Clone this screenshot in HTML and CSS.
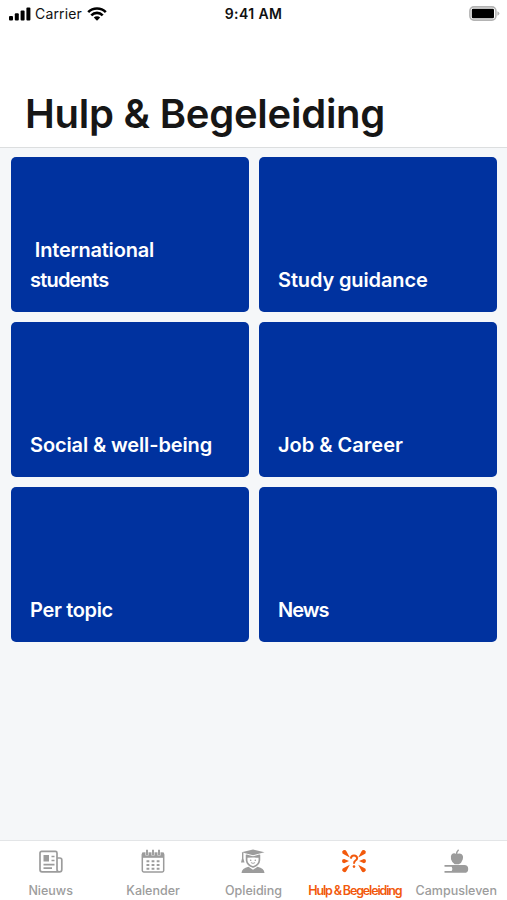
FILE: index.html
```html
<!DOCTYPE html>
<html lang="nl">
<head>
  <meta charset="UTF-8">
  <title>Hulp &amp; Begeleiding</title>
  <meta name="viewport" content="width=device-width, initial-scale=1.0">
  <link rel="stylesheet" href="styles.css">
</head>
<body>

  <header class="header">
    <div class="status-bar">
      <div class="status-left">
        <svg class="signal" width="22" height="14" viewBox="0 0 22 14">
          <rect x="0" y="9" width="4" height="4.5" rx="1"/>
          <rect x="5.8" y="6.3" width="4" height="7.2" rx="1"/>
          <rect x="11.6" y="3.5" width="4" height="10" rx="1"/>
          <rect x="17.4" y="0.5" width="4" height="13" rx="1"/>
        </svg>
        <span class="carrier">Carrier</span>
        <svg class="wifi" width="20" height="14" viewBox="0 0 20 14">
          <path d="M1.2 5.2a12.4 12.4 0 0 1 17.6 0M4.3 8.3a8 8 0 0 1 11.4 0" fill="none" stroke="#000" stroke-width="2.6"/>
          <path d="M10 13.8l-3.2-3.2a4.6 4.6 0 0 1 6.4 0z"/>
        </svg>
      </div>
      <span class="time">9:41 AM</span>
      <div class="status-right">
        <svg class="battery" width="31" height="15" viewBox="0 0 31 15">
          <rect x="0.9" y="0.9" width="26" height="13.2" rx="4" fill="#fff" stroke="#b3b3b3" stroke-width="1.6"/>
          <rect x="2.8" y="2.8" width="22.2" height="9.4" rx="1.2"/>
          <path d="M28.4 5.2q2 .8 2 2.3t-2 2.3z" fill="#b3b3b3"/>
        </svg>
      </div>
    </div>
    <h1>Hulp &amp; Begeleiding</h1>
  </header>

  <main class="cards">
    <a class="card"><span class="label-international">&nbsp;International<br><span class="label-students">students</span></span></a>
    <a class="card"><span class="label-study">Study guidance</span></a>
    <a class="card"><span class="label-social">Social &amp; well-being</span></a>
    <a class="card"><span class="label-job">Job &amp; Career</span></a>
    <a class="card"><span class="label-topic">Per topic</span></a>
    <a class="card"><span class="label-news">News</span></a>
  </main>

  <nav class="tab-bar">
    <a class="tab">
      <svg width="26" height="26" viewBox="0 0 26 26" fill="none" stroke="currentColor" stroke-width="1.7">
        <path d="M19 22.8H4a2 2 0 0 1-2-2V4a1.6 1.6 0 0 1 1.6-1.6h13.8A1.6 1.6 0 0 1 19 4v16.5a2.4 2.4 0 0 0 4.8 0V11a2 2 0 0 0-2-2H19M21.5 22.8H18"/>
        <rect x="5.5" y="6" width="5.5" height="6.5" fill="currentColor" stroke="none"/>
        <path d="M13.5 7.5h3M13.5 11.5h3M5.5 15.6h11M5.5 19.2h8.5"/>
      </svg>
      <span>Nieuws</span>
    </a>
    <a class="tab">
      <svg class="icon-kalender" width="26" height="26" viewBox="0 0 26 26" fill="none" stroke="currentColor" stroke-width="1.5">
        <rect x="2.3" y="4.2" width="21.4" height="18.8" rx="1.4"/>
        <path d="M2 3.6h22v5.2H2z" fill="currentColor" stroke="none"/>
        <path d="M7 1.5v5M13 1.5v5M19 1.5v5" stroke="#fff" stroke-width="3"/>
        <path d="M7 .8v5.4M13 .8v5.4M19 .8v5.4" stroke-width="1.9"/>
        <path d="M6.5 12.2h13M6.5 16h13M6.5 19.8h13" stroke-width="2.1" stroke-dasharray="2.8 2.3"/>
      </svg>
      <span class="tab-kalender">Kalender</span>
    </a>
    <a class="tab">
      <svg width="26" height="26" viewBox="0 0 26 26" fill="currentColor">
        <path d="M13 .6l11.5 2.6L13 6.2 1.5 3.2z"/>
        <path d="M2 3.6h1.4v6l1.1 3.8H1L2 9.6z"/>
        <path d="M6.6 5.8v5.4q.4 4.6 6.4 6.8 6-2.2 6.4-6.8V5.8" fill="none" stroke="currentColor" stroke-width="1.7"/>
        <path d="M6.5 5.6L13 7.3l6.5-1.7v3.2q-4-.4-6.5-.4t-6.5.4z"/>
        <circle cx="10.7" cy="11.2" r=".8"/>
        <circle cx="15.3" cy="11.2" r=".8"/>
        <path d="M10.9 13.6q2.1 1.6 4.2 0" fill="none" stroke="currentColor" stroke-width=".9"/>
        <path d="M1.5 24q.3-4.8 7-6.2l4.5 3 4.5-3q6.7 1.4 7 6.2z"/>
      </svg>
      <span>Opleiding</span>
    </a>
    <a class="tab active">
      <svg class="icon-hulp" width="26" height="26" viewBox="0 0 26 26" fill="currentColor">
        <path d="M1.5 4.4a2.2 2.2 0 0 1 3.9-2.2L8.8 8.4 3.2 5.5z"/>
        <path d="M24.5 4.4a2.2 2.2 0 0 0-3.9-2.2l-3.4 6.2 5.6-2.9z"/>
        <path d="M3.1 10a2.1 2.1 0 0 0 0 4.2L8 12.1z"/>
        <path d="M22.9 10a2.1 2.1 0 0 1 0 4.2L18 12.1z"/>
        <path d="M1.5 19.8a2.2 2.2 0 0 0 3.9 2.2l3.4-6.2-5.6 2.9z"/>
        <path d="M24.5 19.8a2.2 2.2 0 0 1-3.9 2.2l-3.4-6.2 5.6 2.9z"/>
        <circle cx="13" cy="17.6" r="1.3"/>
        <path d="M9.9 9.6q.2-3.2 3.1-3.2t3.1 2.8q0 1.4-1.6 2.3-1.5.9-1.5 3.2" fill="none" stroke="currentColor" stroke-width="2"/>
      </svg>
      <span class="tab-hulp">Hulp &amp; Begeleiding</span>
    </a>
    <a class="tab">
      <svg width="26" height="26" viewBox="0 0 26 26" fill="currentColor">
        <path d="M13.5 5q-2.8-1.4-4.7.2Q7 7 8 10.3q1.2 3.8 3.7 4.9h4q3-1.2 4-4.8 1-3.7-1-5.2-2-1.5-5.2-.2z"/>
        <path d="M13.6 5.5q-.2-2.8 2-4.8" fill="none" stroke="currentColor" stroke-width="1.4"/>
        <path d="M1.5 16h19.8a3.8 3.8 0 0 1 0 7.8H1.5v-1.7h7.2q1.4-2.2 0-4.4H1.5z"/>
      </svg>
      <span>Campusleven</span>
    </a>
  </nav>

</body>
</html>
```

FILE: styles.css
```css
* {
  box-sizing: border-box;
}

body {
  margin: 0;
  height: 900px;
  display: flex;
  flex-direction: column;
  overflow: hidden;
  font-family: 'Inter', sans-serif;
  background: #f5f7f9;
}

.header {
  height: 148px;
  background: #fff;
  border-bottom: 1px solid #dcdedf;
}

.status-bar {
  display: grid;
  grid-template-columns: 1fr auto 1fr;
  align-items: center;
  height: 27px;
  padding: 0 7px 0 9px;
  color: #111;
  font-size: 14px;
}

.status-left {
  display: flex;
  align-items: center;
}

.status-right {
  display: flex;
  justify-content: flex-end;
}

.carrier {
  margin: 0 5px 0 4px;
  letter-spacing: 0.15px;
}

.time {
  margin-right: 2px;
  font-weight: 600;
  letter-spacing: 0.4px;
}

h1 {
  margin: 62px 0 0 25px;
  font-size: 40px;
  line-height: 50px;
  font-weight: 600;
  letter-spacing: -0.25px;
  color: #161616;
  white-space: nowrap;
}

.cards {
  flex: 1;
  display: grid;
  grid-template-columns: 238px 238px;
  grid-auto-rows: 155px;
  gap: 10px;
  padding: 9px 10px 0 11px;
}

.card {
  display: flex;
  align-items: flex-end;
  padding: 0 19px 17px;
  border-radius: 5px;
  background: #00329f;
  color: #fff;
  font-size: 20px;
  line-height: 30px;
  font-weight: 600;
  white-space: nowrap;
}

.label-international {
  letter-spacing: -0.2px;
}

.label-students {
  letter-spacing: -0.8px;
}

.label-study,
.label-social {
  letter-spacing: -0.13px;
}

.label-topic {
  letter-spacing: -0.35px;
}

.label-news {
  letter-spacing: -1px;
}

.tab-bar {
  display: grid;
  grid-template-columns: repeat(5, 1fr);
  height: 60px;
  background: #fff;
  border-top: 1px solid #e3e5e7;
}

.tab {
  display: flex;
  flex-direction: column;
  align-items: center;
  padding-top: 8px;
  color: #9c9c9c;
  font-size: 12.5px;
  line-height: 18px;
  font-weight: 500;
  white-space: nowrap;
}

.tab span {
  margin-top: 7px;
}

.icon-kalender,
.tab-kalender {
  margin-left: 2px;
}

.tab.active {
  color: #f2590c;
}

.icon-hulp {
  margin-right: 2px;
}

.tab-hulp {
  font-weight: 600;
  letter-spacing: -1.15px;
}
```
